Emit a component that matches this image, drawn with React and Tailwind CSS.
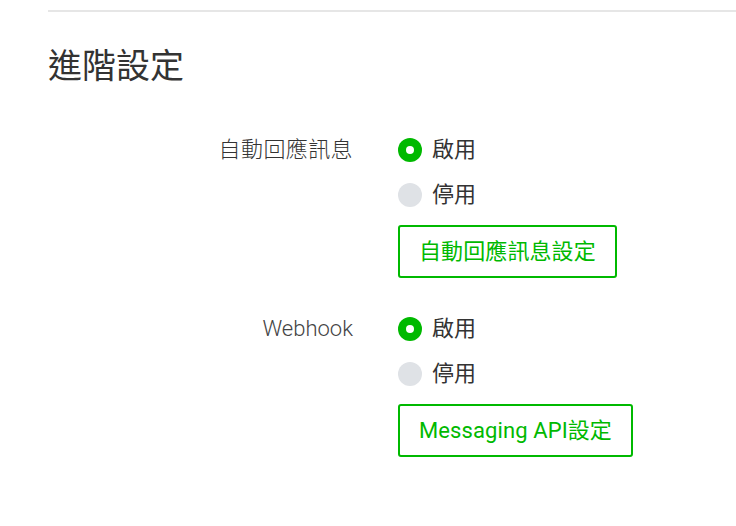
const font = { fontFamily: 'Roboto, "Noto Sans CJK TC", "Noto Sans", sans-serif' };

const Radio = ({ checked, label }) => (
  <div className="flex items-center h-[45px] gap-[10px]">
    {checked ? (
      <span className="w-6 h-6 rounded-full bg-[#00b900] flex items-center justify-center">
        <span className="w-2 h-2 rounded-full bg-white"></span>
      </span>
    ) : (
      <span className="w-6 h-6 rounded-full bg-[#dfe2e6]"></span>
    )}
    <span className="text-[22px] text-[#333] leading-none">{label}</span>
  </div>
);

const Setting = ({ title, button, light }) => (
  <div className="flex">
    <div
      className={
        light
          ? 'w-[305px] h-[45px] flex items-center justify-end text-[22px] text-[#444] font-light leading-none'
          : 'w-[305px] h-[45px] flex items-center justify-end text-[22px] text-[#333] font-light leading-none tracking-[0.4px]'
      }
    >
      {title}
    </div>
    <div className="ml-[45px] flex flex-col items-start">
      <Radio checked label="啟用" />
      <Radio label="停用" />
      <button className="mt-2 h-[53px] px-[19px] border-2 border-[#00b900] rounded-[3px] text-[22px] text-[#00b900] leading-none bg-white tracking-[0.1px]">
        {button}
      </button>
    </div>
  </div>
);

export default function App() {
  return (
    <div className="w-[736px] h-[526px] bg-white overflow-hidden pl-12" style={font}>
      <div className="mt-[10px] border-t-2 border-[#e6e6e6]"></div>
      <h1 className="mt-[30px] text-[34px] leading-[48px] text-[#333] font-normal">進階設定</h1>
      <div className="mt-[37px] flex flex-col gap-[28px]">
        <Setting title="自動回應訊息" button="自動回應訊息設定" />
        <Setting title="Webhook" button="Messaging API設定" light />
      </div>
    </div>
  );
}
